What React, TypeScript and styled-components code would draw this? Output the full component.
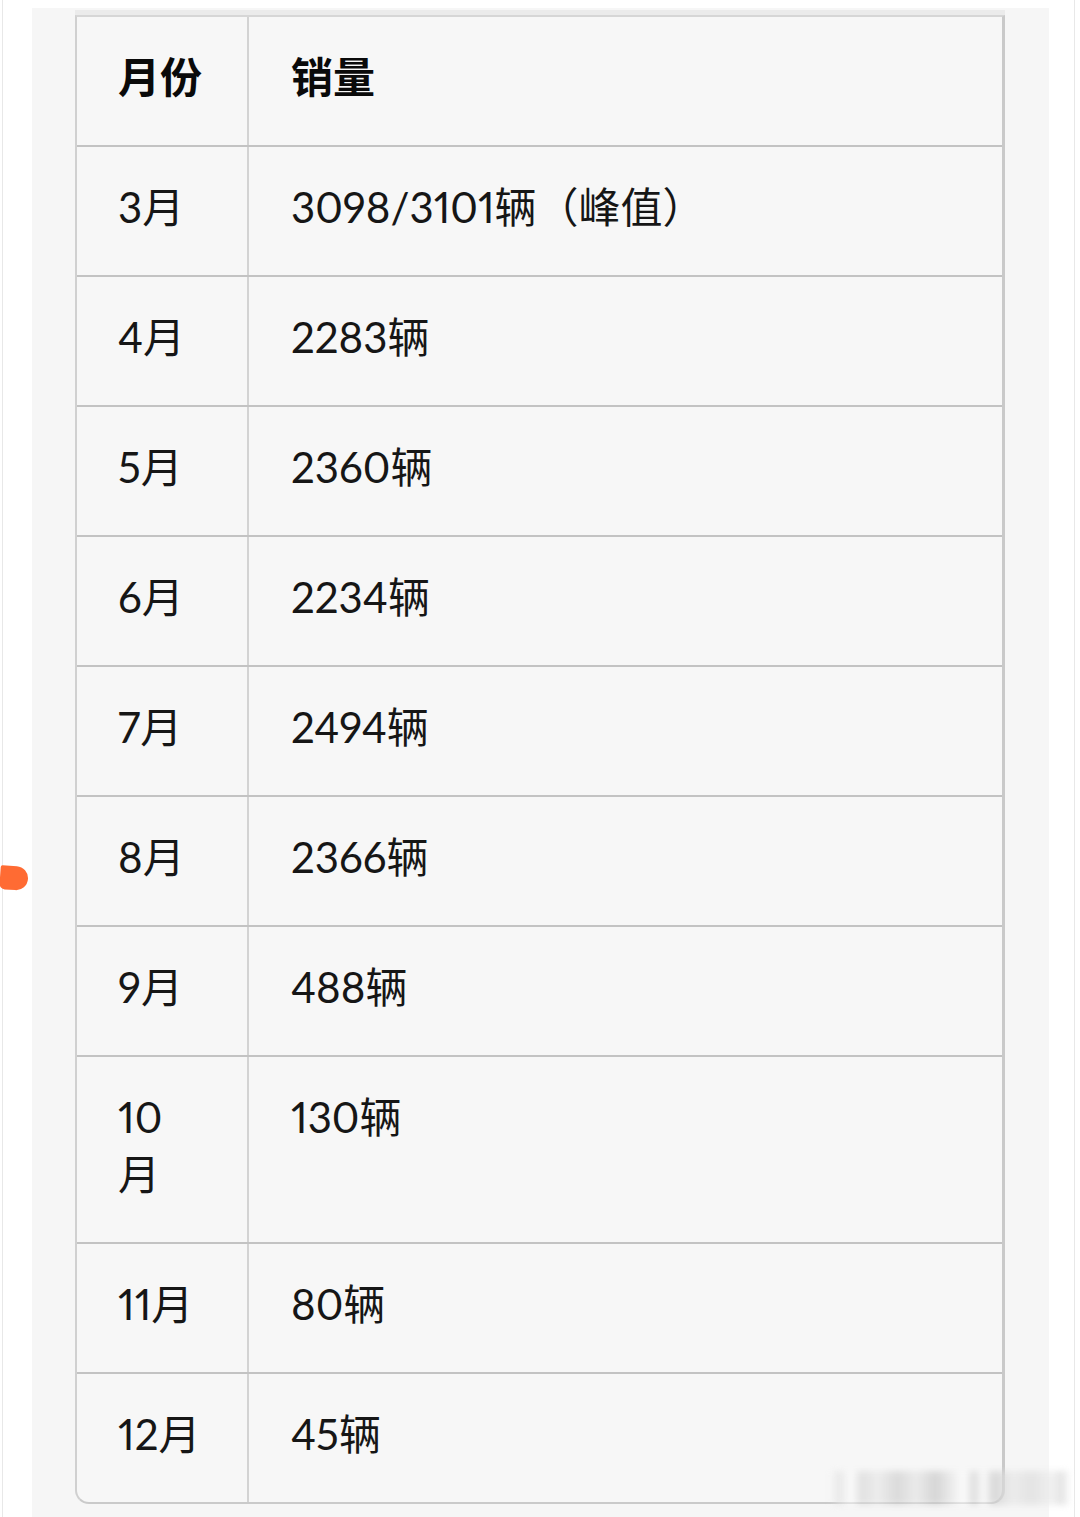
import React from "react";
import styled, { createGlobalStyle } from "styled-components";

const salesData = [
  { id: 3, month: "3月", sales: "3098/3101辆（峰值）" },
  { id: 4, month: "4月", sales: "2283辆" },
  { id: 5, month: "5月", sales: "2360辆" },
  { id: 6, month: "6月", sales: "2234辆" },
  { id: 7, month: "7月", sales: "2494辆" },
  { id: 8, month: "8月", sales: "2366辆" },
  { id: 9, month: "9月", sales: "488辆" },
  { id: 10, month: "10\n月", sales: "130辆" },
  { id: 11, month: "11月", sales: "80辆" },
  { id: 12, month: "12月", sales: "45辆" },
];

export default function App() {
  return (
    <>
      <GlobalStyle />
      <Page>
        <Frame>
          <Panel>
            <Table>
              <Row>
                <MonthCell $head>月份</MonthCell>
                <SalesCell $head>销量</SalesCell>
              </Row>
              {
                salesData.map((item) => (
                  <Row key={item.id}>
                    <MonthCell>{item.month}</MonthCell>
                    <SalesCell>{item.sales}</SalesCell>
                  </Row>
                ))
              }
            </Table>
          </Panel>
        </Frame>
        <Marker />
        <Watermark />
      </Page>
    </>
  );
}

const GlobalStyle = createGlobalStyle`
  * {
    box-sizing: border-box;
  }

  body {
    margin: 0;
    background: #ffffff;
    font-family: Lato, "Noto Sans CJK SC", sans-serif;
    font-variant-numeric: proportional-nums;
  }
`;

const Page = styled.div`
  position: relative;
  padding: 0 5px 0 2px;
  background: #ffffff;
`;

const Frame = styled.div`
  border-left: 1px solid #e8e8e8;
  border-right: 1px solid #e8e8e8;
  padding: 8px 25px 0 29px;
`;

const Panel = styled.div`
  background: #f6f6f6;
  padding: 7px 44px 15px 43px;
`;

const Table = styled.div`
  background: #f7f7f7;
  border-top: 2px solid #d6d6d6;
  border-left: 2px solid #d0d0d0;
  border-right: 3px solid #c9c9c9;
  border-bottom: 2px solid #cacaca;
  border-radius: 0 0 14px 14px;
  box-shadow: 0 -5px 0 #ebebeb;
  overflow: hidden;

  display: flex;
  flex-direction: column;
`;

const Row = styled.div`
  display: grid;
  grid-template-columns: 172px 1fr;
  border-bottom: 2px solid #c3c3c3;

  &:last-child {
    border-bottom: none;
  }
`;

const Cell = styled.div<{ $head?: boolean }>`
  padding-top: 32px;
  padding-bottom: 39px;
  font-size: 42px;
  line-height: 57px;
  font-weight: ${({ $head }) => ($head ? 700 : 400)};
  color: ${({ $head }) => ($head ? "#0a0a0a" : "#161616")};
  white-space: pre-line;
`;

const MonthCell = styled(Cell)`
  padding-left: 41px;
  padding-right: 20px;
  border-right: 2px solid #d3d3d3;
`;

const SalesCell = styled(Cell)`
  padding-left: 42px;
  padding-right: 20px;
`;

const Marker = styled.div`
  position: absolute;
  left: 0;
  top: 866px;
  width: 28px;
  height: 24px;
  background: #ff6b33;
  border-radius: 2px 13px 13px 6px;
  transform: rotate(4deg);
`;

const Watermark = styled.div`
  position: absolute;
  left: 830px;
  top: 1471px;
  width: 240px;
  height: 34px;
  filter: blur(3px);
  opacity: 0.7;
  background: linear-gradient(
    90deg,
    rgba(255, 255, 255, 0) 0%,
    #e2e2e2 4%,
    #ffffff 9%,
    #d8d8d8 13%,
    #e9e9e9 20%,
    #cfcfcf 28%,
    #e6e6e6 36%,
    #c8c8c8 44%,
    #eeeeee 52%,
    #ffffff 56%,
    #d2d2d2 60%,
    #ffffff 64%,
    #cccccc 68%,
    #e8e8e8 76%,
    #dddddd 84%,
    #ececec 92%,
    #d9d9d9 97%,
    rgba(255, 255, 255, 0) 100%
  );
`;
